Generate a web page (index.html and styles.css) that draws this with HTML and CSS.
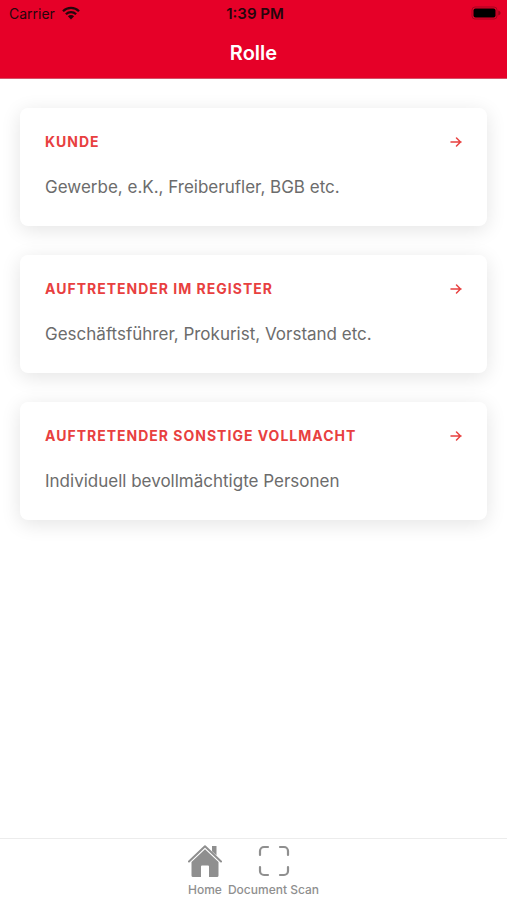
FILE: index.html
```html
<!DOCTYPE html>
<html lang="de">
<head>
<meta charset="utf-8">
<meta name="viewport" content="width=device-width, initial-scale=1">
<title>Rolle</title>
<link rel="stylesheet" href="styles.css">
</head>
<body>
<header class="header">
  <div class="status">
    <div class="carrier">
      <span>Carrier</span>
      <svg class="wifi" viewBox="0 0 18 14" aria-hidden="true">
        <path d="M1 5.2a11.4 11.4 0 0 1 16 0M3.900 8.200a7.200 7.200 0 0 1 10.200 0" fill="none" stroke="currentColor" stroke-width="2.300"/>
        <path d="M9 13.500 5.900 10.300a4.400 4.400 0 0 1 6.200 0z" fill="currentColor"/>
      </svg>
    </div>
    <time class="clock">1:39 PM</time>
    <svg class="battery" viewBox="0 0 30 14" aria-hidden="true">
      <rect x="1" y="1" width="25" height="12" rx="3" fill="none" stroke="#a50520" stroke-width="1"/>
      <rect x="2.500" y="2.500" width="22" height="9" rx="2" fill="#000"/>
      <path d="M27.300 4.500v5c1.400-.4 2.200-1.300 2.200-2.500s-.8-2.100-2.200-2.500z" fill="#950418"/>
    </svg>
  </div>
  <h1 class="title">Rolle</h1>
</header>
<main class="roles">
  <a class="card" href="#kunde">
    <span class="card-head">
      <span class="card-title">KUNDE</span>
      <svg class="arrow" viewBox="0 0 12 12" aria-hidden="true"><path d="M1 6h10M6.500 2 10.500 6l-4 4"/></svg>
    </span>
    <span class="card-text">Gewerbe, e.K., Freiberufler, BGB etc.</span>
  </a>
  <a class="card" href="#register">
    <span class="card-head">
      <span class="card-title">AUFTRETENDER IM REGISTER</span>
      <svg class="arrow" viewBox="0 0 12 12" aria-hidden="true"><path d="M1 6h10M6.500 2 10.500 6l-4 4"/></svg>
    </span>
    <span class="card-text">Geschäftsführer, Prokurist, Vorstand etc.</span>
  </a>
  <a class="card" href="#vollmacht">
    <span class="card-head">
      <span class="card-title">AUFTRETENDER SONSTIGE VOLLMACHT</span>
      <svg class="arrow" viewBox="0 0 12 12" aria-hidden="true"><path d="M1 6h10M6.500 2 10.500 6l-4 4"/></svg>
    </span>
    <span class="card-text">Individuell bevollmächtigte Personen</span>
  </a>
</main>
<nav class="tabs">
  <a class="tab" href="#home">
    <svg class="tab-icon" viewBox="0 0 34 34" aria-hidden="true">
      <path d="M1 17.500 17 2.200l16 15.300" fill="none" stroke="currentColor" stroke-width="2" stroke-linecap="round" stroke-linejoin="round"/>
      <path d="M24 2h4.500v9.500L24 7.200z" fill="currentColor"/>
      <path d="M17 5.300 30.500 18V31.500a1.500 1.500 0 0 1-1.500 1.500h-8V22.500a1 1 0 0 0-1-1h-6a1 1 0 0 0-1 1V33H5a1.500 1.500 0 0 1-1.500-1.500V18z" fill="currentColor"/>
    </svg>
    <span>Home</span>
  </a>
  <a class="tab" href="#scan">
    <svg class="tab-icon" viewBox="0 0 34 34" aria-hidden="true">
      <path d="M3 11V7a4 4 0 0 1 4-4h4M23 3h4a4 4 0 0 1 4 4v4M31 23v4a4 4 0 0 1-4 4h-4M11 31H7a4 4 0 0 1-4-4v-4" fill="none" stroke="currentColor" stroke-width="2.200" stroke-linecap="round"/>
    </svg>
    <span>Document Scan</span>
  </a>
</nav>
</body>
</html>
```
FILE: styles.css
```css
* {
  box-sizing: border-box;
}

body {
  margin: 0;
  min-height: 100vh;
  display: flex;
  flex-direction: column;
  background: #fff;
  font-family: Inter, "Liberation Sans", sans-serif;
}

a {
  text-decoration: none;
}

.header {
  background: #e60028;
  padding-bottom: 12px;
  border-bottom: 1px solid #d4526a;
}

.status {
  display: grid;
  grid-template-columns: 1fr auto 1fr;
  align-items: center;
  height: 26px;
  padding: 0 6px 0 9px;
  font-size: 14px;
  color: #26060c;
}

.carrier {
  display: flex;
  align-items: center;
  gap: 7px;
}

.wifi {
  width: 18px;
  height: 14px;
}

.clock {
  font-size: 15px;
  font-weight: 600;
}

.battery {
  width: 30px;
  height: 14px;
  justify-self: end;
}

.title {
  margin: 14px 0 0;
  font-size: 20px;
  line-height: 26px;
  font-weight: 600;
  text-align: center;
  color: #fff;
}

.roles {
  flex: 1;
  display: flex;
  flex-direction: column;
  gap: 29px;
  padding: 29px 20px;
}

.card {
  display: flex;
  flex-direction: column;
  gap: 23px;
  padding: 23px 25px 27px;
  border-radius: 8px;
  background: #fff;
  box-shadow: 0 4px 20px rgba(0, 0, 0, 0.11);
}

.card-head {
  display: flex;
  align-items: center;
  justify-content: space-between;
  line-height: 21px;
}

.card-title {
  font-size: 14px;
  font-weight: 700;
  letter-spacing: 1px;
  color: #e8403f;
}

.arrow {
  width: 12px;
  height: 12px;
  fill: none;
  stroke: #e8403f;
  stroke-width: 1.5;
  stroke-linecap: round;
  stroke-linejoin: round;
}

.card-text {
  font-size: 17px;
  line-height: 24px;
  color: #6c6c6c;
}

.tabs {
  display: flex;
  justify-content: center;
  gap: 6px;
  padding: 5px 0 2px;
  border-top: 1px solid #ececec;
}

.tab {
  display: flex;
  flex-direction: column;
  align-items: center;
  gap: 4px;
  font-size: 12px;
  line-height: 16px;
  font-weight: 500;
  color: #8f8f8f;
}

.tab-icon {
  width: 34px;
  height: 34px;
}
```
